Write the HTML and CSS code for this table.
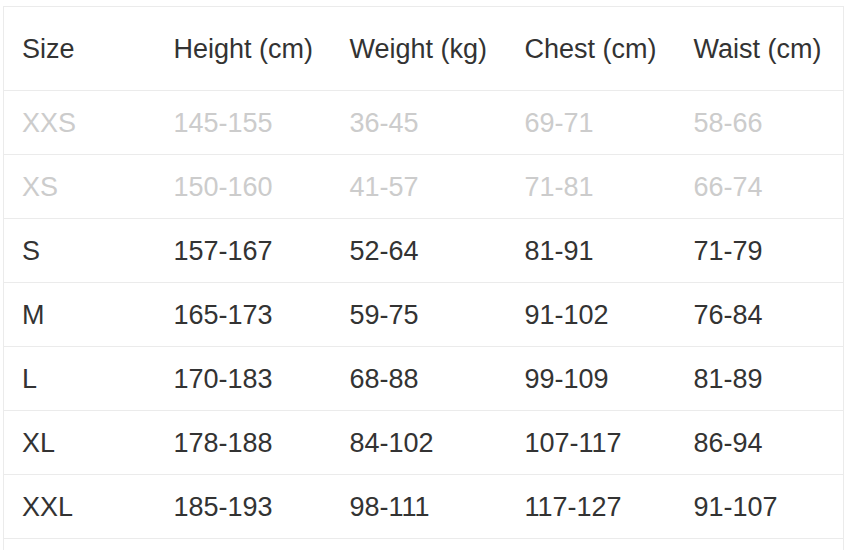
FILE: index.html
```html
<!DOCTYPE html>
<html>
<head>
<meta charset="utf-8">
<link rel="stylesheet" href="styles.css">
</head>
<body>
<table class="size-table">
  <colgroup>
    <col class="c1"><col class="c2"><col class="c3"><col class="c4"><col class="c5">
  </colgroup>
  <thead>
    <tr class="head"><th>Size</th><th>Height (cm)</th><th>Weight (kg)</th><th>Chest (cm)</th><th>Waist (cm)</th></tr>
  </thead>
  <tbody>
    <tr class="muted"><td>XXS</td><td>145-155</td><td>36-45</td><td>69-71</td><td>58-66</td></tr>
    <tr class="muted"><td>XS</td><td>150-160</td><td>41-57</td><td>71-81</td><td>66-74</td></tr>
    <tr><td>S</td><td>157-167</td><td>52-64</td><td>81-91</td><td>71-79</td></tr>
    <tr><td>M</td><td>165-173</td><td>59-75</td><td>91-102</td><td>76-84</td></tr>
    <tr><td>L</td><td>170-183</td><td>68-88</td><td>99-109</td><td>81-89</td></tr>
    <tr><td>XL</td><td>178-188</td><td>84-102</td><td>107-117</td><td>86-94</td></tr>
    <tr><td>XXL</td><td>185-193</td><td>98-111</td><td>117-127</td><td>91-107</td></tr>
    <tr><td></td><td></td><td></td><td></td><td></td></tr>
  </tbody>
</table>
</body>
</html>
```
FILE: styles.css
```css
html, body {
  background: #ffffff;
}
body {
  margin: 6px 0 0 3px;
  font-family: "Liberation Sans", Arial, Helvetica, sans-serif;
  color: #333333;
  overflow: hidden;
}
.size-table {
  border-collapse: collapse;
  table-layout: fixed;
  width: 840px;
  border: 1px solid #ebebeb;
}
.c1 { width: 152px; }
.c2 { width: 176px; }
.c3 { width: 175px; }
.c4 { width: 169px; }
.c5 { width: 168px; }
.size-table th,
.size-table td {
  text-align: left;
  font-weight: normal;
  font-size: 27px;
  line-height: 30px;
  padding: 0 0 0 18px;
  border-bottom: 1px solid #ebebeb;
  white-space: nowrap;
}
.size-table th {
  height: 83px;
  color: #333333;
}
.size-table td {
  height: 63px;
}
.muted td {
  color: #cccccc;
}
```
